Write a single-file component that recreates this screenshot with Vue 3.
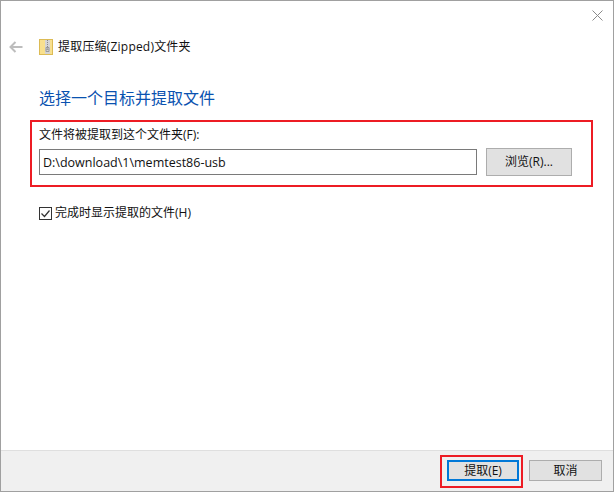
<script setup>
const path = 'D:\\download\\1\\memtest86-usb'
</script>

<template>
  <div class="window">
    <div class="close-row">
      <svg class="close" width="11" height="11" viewBox="0 0 11 11"><path d="M.5.5l10 10M10.500.5l-10 10" stroke="#8a8a8a" stroke-width="1" fill="none"/></svg>
    </div>
    <div class="nav">
      <svg class="back" width="14" height="12" viewBox="0 0 14 12"><path d="M6.500 1L1.500 6l5 5M2 6h11.500" stroke="#bdbdbd" stroke-width="2" fill="none"/></svg>
      <svg class="zip" width="14" height="16" viewBox="0 0 14 16">
        <rect x="0.500" y="0.500" width="13" height="15" fill="#f8e08e" stroke="#dcbb55"/>
        <rect x="6" y="1" width="5" height="14" fill="#d4d4d4"/>
        <path d="M8.500 1v7M8 9h1v4h-1z" stroke="#8a8a8a" stroke-width="1" stroke-dasharray="1 1" fill="none"/>
        <path d="M7 8.500h3v4h-3z" stroke="#9a9a9a" stroke-width="1" fill="none"/>
      </svg>
      <span class="nav-title">提取压缩(Zipped)文件夹</span>
    </div>
    <main class="content">
      <h1 class="heading">选择一个目标并提取文件</h1>
      <label class="field-label">文件将被提取到这个文件夹(F):</label>
      <div class="path-row">
        <input class="path" :value="path" />
        <button class="btn browse">浏览(R)...</button>
      </div>
      <div class="check-row">
        <svg width="13" height="13" viewBox="0 0 13 13"><rect x=".5" y=".5" width="12" height="12" fill="#fff" stroke="#333"/><path d="M2.500 6.500l3 3 5-6" stroke="#333" stroke-width="1.200" fill="none"/></svg>
        <span>完成时显示提取的文件(H)</span>
      </div>
      <div class="mark mark-top"></div>
    </main>
    <footer class="footer">
      <button class="btn action primary">提取(E)</button>
      <button class="btn action">取消</button>
      <div class="mark mark-bottom"></div>
    </footer>
  </div>
</template>

<style>
html, body { margin: 0; background: #fff; }
</style>

<style scoped>
.window {
  box-sizing: border-box;
  width: 614px;
  height: 492px;
  border: 1px solid #a0a0a0;
  display: flex;
  flex-direction: column;
  background: #fff;
  color: #111;
  font-family: "Open Sans", "Noto Sans CJK SC", sans-serif;
  font-size: 12px;
  line-height: 16px;
  position: relative;
}
.close-row {
  height: 38px;
  display: flex;
  justify-content: flex-end;
  padding: 9px 10px 0 0;
  box-sizing: border-box;
}
.close { display: block; }
.nav {
  display: flex;
  align-items: center;
  height: 16px;
  padding-left: 8px;
}
.back { margin-right: 16px; }
.zip { margin-right: 5px; }
.nav-title { letter-spacing: 0.2px; }
.content {
  flex: 1;
  position: relative;
  padding: 0 0 0 38px;
}
.heading {
  margin: 32px 0 0;
  font-size: 16px;
  font-weight: 400;
  line-height: 22px;
  color: #0a52b0;
}
.field-label {
  display: block;
  margin-top: 18px;
  height: 21px;
}
.path-row {
  display: flex;
  align-items: center;
  height: 28px;
  gap: 9px;
}
.path {
  box-sizing: border-box;
  width: 438px;
  height: 26px;
  border: 1px solid #7a7a7a;
  padding: 0 3px;
  font: inherit;
  font-size: 12.500px;
  color: #111;
  outline: none;
}
.btn {
  box-sizing: border-box;
  background: #e1e1e1;
  border: 1px solid #adadad;
  font: inherit;
  color: #111;
  padding: 0;
}
.browse {
  width: 86px;
  height: 28px;
}
.check-row {
  display: flex;
  align-items: center;
  gap: 3px;
  margin-top: 30px;
  height: 14px;
}
.check-row svg { display: block; }
.footer {
  box-sizing: border-box;
  height: 41px;
  flex: none;
  position: relative;
  background: #f0f0f0;
  border-top: 1px solid #dfdfdf;
  display: flex;
  justify-content: flex-end;
  gap: 10px;
  padding: 9px 11px 0 0;
}
.action {
  width: 73px;
  height: 21px;
  line-height: 17px;
}
.primary {
  border: 2px solid #0078d7;
  width: 72px;
}
.mark {
  position: absolute;
  box-sizing: border-box;
  border: 2px solid #ed1c24;
  pointer-events: none;
}
.mark-top {
  left: 29px;
  top: 65px;
  width: 563px;
  height: 67px;
}
.mark-bottom {
  left: 439px;
  top: 4px;
  width: 83px;
  height: 33px;
}
</style>
